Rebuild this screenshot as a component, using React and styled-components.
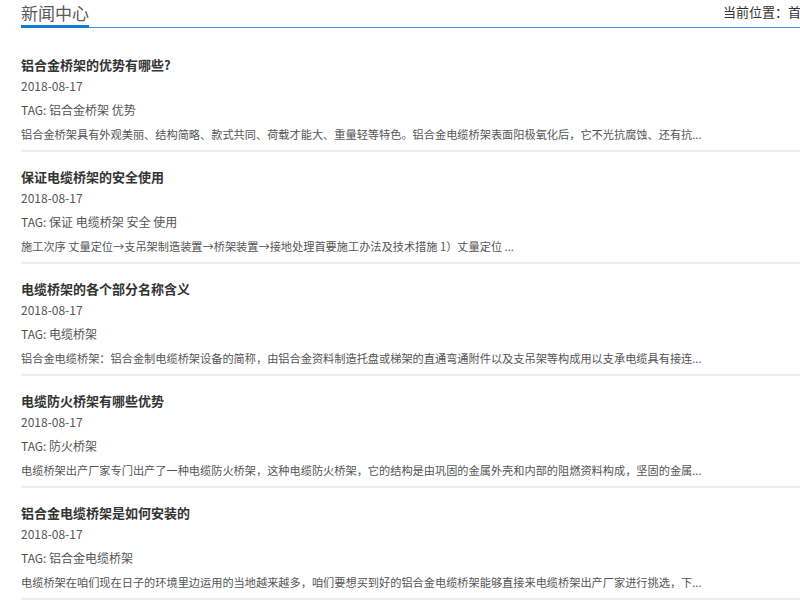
import React from "react";
import styled, { createGlobalStyle } from "styled-components";

const GlobalStyle = createGlobalStyle`
  html, body {
    margin: 0;
    padding: 0;
    background: #ffffff;
    overflow: hidden;
  }
  body {
    font-family: "Noto Sans CJK SC", "Noto Sans", sans-serif;
    color: #333;
  }
`;

const Page = styled.div`
  width: 962px;
  padding-left: 21px;
`;

const Header = styled.div`
  display: grid;
  grid-template-columns: 1fr 260px;
  align-items: start;
  height: 27px;
  border-bottom: 1px solid #4592dc;
`;

const HeadTitle = styled.div`
  justify-self: start;
  height: 25px;
  line-height: 25px;
  font-size: 17px;
  color: #5a5a5a;
  border-bottom: 3px solid #1479d4;
  margin-bottom: -1px;
`;

const Crumb = styled.div`
  font-size: 13px;
  line-height: 23px;
  color: #333;
  white-space: nowrap;
`;

const List = styled.ul`
  list-style: none;
  margin: 12px 0 0;
  padding: 0;
`;

const Item = styled.li`
  padding: 15px 0 6px;
  border-bottom: 2px solid #efefef;
`;

const Title = styled.h3`
  margin: 0;
  font-size: 13px;
  line-height: 20px;
  font-weight: 700;
  color: #333;
`;

const Date = styled.div`
  margin-top: 1px;
  font-size: 12px;
  line-height: 20px;
  color: #555;
`;

const Line = styled.div`
  margin-top: 4px;
  font-size: ${(p) => p.$size || "11.2px"};
  line-height: 20px;
  color: #555;
  white-space: nowrap;
`;

const items = [
  {
    title: "铝合金桥架的优势有哪些?",
    tag: "TAG: 铝合金桥架 优势",
    text: "铝合金桥架具有外观美丽、结构简略、款式共同、荷载才能大、重量轻等特色。铝合金电缆桥架表面阳极氧化后，它不光抗腐蚀、还有抗...",
  },
  {
    title: "保证电缆桥架的安全使用",
    tag: "TAG: 保证 电缆桥架 安全 使用",
    text: "施工次序 丈量定位→支吊架制造装置→桥架装置→接地处理首要施工办法及技术措施 1）丈量定位 ...",
  },
  {
    title: "电缆桥架的各个部分名称含义",
    tag: "TAG: 电缆桥架",
    text: "铝合金电缆桥架：铝合金制电缆桥架设备的简称，由铝合金资料制造托盘或梯架的直通弯通附件以及支吊架等构成用以支承电缆具有接连...",
  },
  {
    title: "电缆防火桥架有哪些优势",
    tag: "TAG: 防火桥架",
    text: "电缆桥架出产厂家专门出产了一种电缆防火桥架，这种电缆防火桥架，它的结构是由巩固的金属外壳和内部的阻燃资料构成，坚固的金属...",
  },
  {
    title: "铝合金电缆桥架是如何安装的",
    tag: "TAG: 铝合金电缆桥架",
    text: "电缆桥架在咱们现在日子的环境里边运用的当地越来越多，咱们要想买到好的铝合金电缆桥架能够直接来电缆桥架出产厂家进行挑选，下...",
  },
];

export default function App() {
  return (
    <>
      <GlobalStyle />
      <Page>
        <Header>
          <HeadTitle>新闻中心</HeadTitle>
          <Crumb>当前位置：首页 &gt; 新闻中心</Crumb>
        </Header>
        <List>
          {items.map((it) => (
            <Item key={it.title}>
              <Title>{it.title}</Title>
              <Date>2018-08-17</Date>
              <Line $size="12px">{it.tag}</Line>
              <Line>{it.text}</Line>
            </Item>
          ))}
        </List>
      </Page>
    </>
  );
}
